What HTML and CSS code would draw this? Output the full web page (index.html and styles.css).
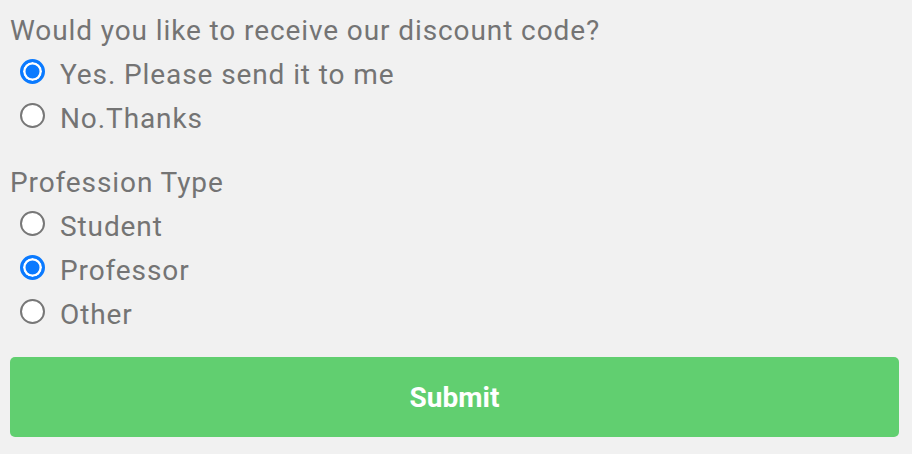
FILE: index.html
```html
<!DOCTYPE html>
<html lang="en">

<head>
    <meta charset="UTF-8">
    <meta name="viewport" content="width=device-width, initial-scale=1.0">
    <title>Discount Code</title>
    <link rel="stylesheet" href="styles.css">
</head>

<body>
    <form class="discount-form">
        <div class="group">
            <p class="question">Would you like to receive our discount code?</p>
            <label class="option"><input type="radio" name="discount" value="yes" checked>Yes. Please send it to me</label>
            <label class="option"><input type="radio" name="discount" value="no">No.Thanks</label>
        </div>

        <div class="group">
            <p class="question">Profession Type</p>
            <label class="option"><input type="radio" name="profession" value="student">Student</label>
            <label class="option"><input type="radio" name="profession" value="professor" checked>Professor</label>
            <label class="option"><input type="radio" name="profession" value="other">Other</label>
        </div>

        <button type="submit" class="submit-btn">Submit</button>
    </form>
</body>

</html>
```

FILE: styles.css
```css
body {
    font-family: Roboto, "Liberation Sans", sans-serif;
    margin: 0;
    background-color: #f1f1f1;
    color: #747474;
}

.discount-form {
    display: flex;
    flex-direction: column;
    gap: 20px;
    width: 889px;
    padding: 9px 0 0 10px;
}

.group {
    display: flex;
    flex-direction: column;
}

.question {
    margin: 0;
    font-size: 28px;
    line-height: 44px;
    letter-spacing: 0.9px;
}

.option {
    display: flex;
    align-items: flex-start;
    gap: 15px;
    padding-left: 10px;
    font-size: 28px;
    line-height: 44px;
    letter-spacing: 0.9px;
    cursor: pointer;
}

.option input {
    appearance: none;
    -webkit-appearance: none;
    flex: none;
    width: 25px;
    height: 25px;
    margin: 6px 0 0 0;
    border: 2px solid #777777;
    border-radius: 50%;
    background-color: #ffffff;
    cursor: pointer;
}

.option input:checked {
    border: 3px solid #0a7aff;
    background-color: #0a7aff;
    box-shadow: inset 0 0 0 2.5px #ffffff;
}

.submit-btn {
    height: 80px;
    border: none;
    border-radius: 5px;
    background-color: #61cf70;
    color: #ffffff;
    font-family: Roboto, "Liberation Sans", sans-serif;
    font-size: 28px;
    font-weight: bold;
    cursor: pointer;
}
```
